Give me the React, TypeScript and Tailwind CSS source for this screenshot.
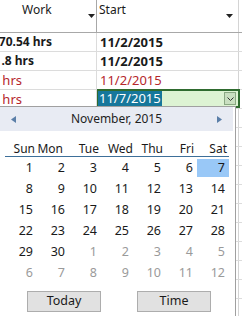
import React from "react";

const weeks: { d: number; other: boolean }[][] = [
  [1, 2, 3, 4, 5, 6, 7].map((d) => ({ d, other: false })),
  [8, 9, 10, 11, 12, 13, 14].map((d) => ({ d, other: false })),
  [15, 16, 17, 18, 19, 20, 21].map((d) => ({ d, other: false })),
  [22, 23, 24, 25, 26, 27, 28].map((d) => ({ d, other: false })),
  [
    { d: 29, other: false },
    { d: 30, other: false },
    { d: 1, other: true },
    { d: 2, other: true },
    { d: 3, other: true },
    { d: 4, other: true },
    { d: 5, other: true },
  ],
  [6, 7, 8, 9, 10, 11, 12].map((d) => ({ d, other: true })),
];

const dayNames = [
  { n: "Sun", c: "pr-[2px]" },
  { n: "Mon", c: "pr-[6px]" },
  { n: "Tue", c: "pr-[2px]" },
  { n: "Wed", c: "pr-0" },
  { n: "Thu", c: "pr-[2px]" },
  { n: "Fri", c: "pr-[3px]" },
  { n: "Sat", c: "pr-[2px]" },
];

function Arrow() {
  return (
    <svg width="7" height="4" viewBox="0 0 7 4" className="block">
      <path d="M0 0 L7 0 L3.5 4 Z" fill="#222" />
    </svg>
  );
}

export default function App() {
  const emptyRows = Array.from({ length: 12 });
  return (
    <div
      className="relative w-[242px] h-[316px] overflow-hidden bg-white text-[12px] text-[#1a1a1a]"
      style={{ fontFamily: '"Noto Sans", "Open Sans", sans-serif' }}
    >
      {/* header */}
      <div className="flex h-[33px] border-b border-[#a8a8a8]">
        <div className="relative w-[97px] border-r border-[#a8a8a8] flex items-start">
          <span className="ml-[22px] mt-[1px] leading-[18px]">Work</span>
          <div className="absolute left-[88px] top-[14px]">
            <Arrow />
          </div>
        </div>
        <div className="relative w-[142px] border-r border-[#d4d4d4]">
          <span className="ml-[2px] mt-[1px] block leading-[18px]">Start</span>
          <div className="absolute left-[129px] top-[14px]">
            <Arrow />
          </div>
        </div>
        <div className="flex-1" />
      </div>

      {/* row 1 */}
      <div className="flex h-[19px] border-b border-[#dcdcdc] font-bold leading-[18px] text-[13px]">
        <div className="w-[97px] border-r border-[#dcdcdc] overflow-hidden flex justify-end pr-[44px] whitespace-nowrap text-[12px]">
          <span>70.54 hrs</span>
        </div>
        <div className="w-[142px] border-r border-[#d4d4d4] pl-[3px]">11/2/2015</div>
      </div>
      {/* row 2 */}
      <div className="flex h-[19px] border-b border-[#dcdcdc] font-bold leading-[18px] text-[13px]">
        <div className="w-[97px] border-r border-[#dcdcdc] overflow-hidden flex justify-end pr-[62px] whitespace-nowrap text-[12px]">
          <span>.8 hrs</span>
        </div>
        <div className="w-[142px] border-r border-[#d4d4d4] pl-[3px]">11/2/2015</div>
      </div>
      {/* row 3 */}
      <div className="flex h-[19px] border-b border-[#dcdcdc] text-[#b5262b] leading-[18px] text-[13px]">
        <div className="w-[97px] border-r border-[#dcdcdc] overflow-hidden flex justify-end pr-[74px] whitespace-nowrap">
          <span>hrs</span>
        </div>
        <div className="w-[142px] border-r border-[#d4d4d4] pl-[3px]">11/2/2015</div>
      </div>
      {/* row 4 (editing) */}
      <div className="flex h-[19px] border-b border-[#dcdcdc] leading-[18px] text-[13px]">
        <div className="w-[97px] border-r border-[#dcdcdc] overflow-hidden flex justify-end pr-[74px] whitespace-nowrap text-[#b5262b]">
          <span>hrs</span>
        </div>
        <div className="relative w-[143px] -mt-[1px] h-[19px] border-2 border-[#2f6b2f] bg-[#ddf3d3] flex items-center">
          <span className="bg-[#16779b] text-white leading-[15px] px-[1px] -ml-[1px]">11/7/2015</span>
          <div className="absolute right-[2px] top-[1px] w-[12px] h-[13px] border border-[#8aa883] bg-[#c9dfc0] flex items-center justify-center">
            <svg width="7" height="4" viewBox="0 0 7 4">
              <path d="M0.5 0.5 L3.5 3.5 L6.5 0.5" fill="none" stroke="#333" strokeWidth="1" />
            </svg>
          </div>
        </div>
      </div>
      {emptyRows.map((_, i) => (
        <div key={i} className="flex h-[19px] border-b border-[#dcdcdc]">
          <div className="w-[97px] border-r border-[#dcdcdc]" />
          <div className="w-[142px] border-r border-[#d4d4d4]" />
        </div>
      ))}

      {/* calendar popup */}
      <div className="absolute left-[-1px] top-[106px] w-[237px] h-[230px] border border-[#a0a0a0] bg-white flex flex-col">
        <div className="mr-[2px] h-[24px] bg-[#e8ebf3] flex items-center justify-between px-[11px] text-[12px] text-[#1e1e1e]">
          <svg width="5" height="7" viewBox="0 0 5 7">
            <path d="M5 0 L0 3.5 L5 7 Z" fill="#5b7fa8" />
          </svg>
          <span>November, 2015</span>
          <svg width="5" height="7" viewBox="0 0 5 7">
            <path d="M0 0 L5 3.5 L0 7 Z" fill="#5b7fa8" />
          </svg>
        </div>
        <div className="ml-[5px] mt-[10px] w-[224px]">
          <div className="grid grid-cols-[repeat(7,32px)] border-b border-[#3d6f99] h-[16px] leading-[15px] text-[12px]">
            {dayNames.map((d) => (
              <div key={d.n} className={"text-right " + d.c}>
                {d.n}
              </div>
            ))}
          </div>
          <div className="flex flex-col gap-[3px] mt-[2px]">
            {weeks.map((w, wi) => (
              <div key={wi} className="grid grid-cols-[repeat(7,32px)] h-[18px] leading-[18px] text-[12.5px]">
                {w.map((c, ci) => (
                  <div
                    key={ci}
                    className={
                      "text-right pr-[4px] " +
                      (c.other ? "text-[#9a9a9a] " : "text-[#1a1a1a] ") +
                      (wi === 0 && ci === 6 ? "bg-[#99c8f7]" : "")
                    }
                  >
                    {c.d}
                  </div>
                ))}
              </div>
            ))}
          </div>
        </div>
        <div className="flex mt-[9px] ml-[27px] gap-[36px]">
          <div className="w-[74px] h-[21px] border border-[#adadad] bg-[#e1e1e1] flex items-center justify-center text-[12.5px]">
            Today
          </div>
          <div className="w-[74px] h-[21px] border border-[#adadad] bg-[#e1e1e1] flex items-center justify-center text-[12.5px]">
            Time
          </div>
        </div>
      </div>
    </div>
  );
}
